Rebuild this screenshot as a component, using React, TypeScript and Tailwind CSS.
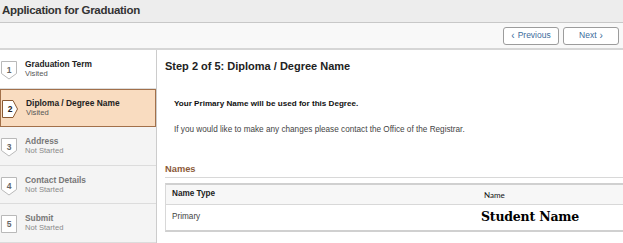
import React from "react";

function Badge({ n, shape, active }: { n: number; shape: "down" | "right" | "square"; active?: boolean }) {
  const stroke = active ? "#8a5a34" : "#b9b9b9";
  const fill = "#ffffff";
  let d = "";
  if (shape === "down") d = "M0.5 0.5 H15.5 V12.5 L8 18 L0.5 12.5 Z";
  if (shape === "right") d = "M0.5 0.5 H11 L15.5 9 L11 17.5 H0.5 Z";
  if (shape === "square") d = "M0.5 0.5 H15.5 V17.5 H0.5 Z";
  return (
    <div className="relative w-[16px] h-[19px] shrink-0">
      <svg width="16" height="19" viewBox="0 0 16 19" className="absolute inset-0">
        <path d={d} fill={fill} stroke={stroke} strokeWidth="1" />
      </svg>
      <span
        className={`absolute left-0 top-[3px] w-[16px] text-center text-[8.5px] leading-[12px] font-bold ${active ? "text-[#222]" : "text-[#666]"}`}
      >
        {n}
      </span>
    </div>
  );
}

function Step({
  n,
  title,
  status,
  shape,
  variant,
}: {
  n: number;
  title: string;
  status: string;
  shape: "down" | "right" | "square";
  variant: "visited" | "active" | "none";
}) {
  const bg =
    variant === "active"
      ? "bg-[#f9dcc0] border border-[#a2704a]"
      : variant === "visited"
      ? "bg-white border-b border-[#dcdcdc]"
      : "bg-[#f4f4f4] border-b border-[#dcdcdc]";
  const titleColor = variant === "none" ? "text-[#777]" : "text-[#222]";
  const statusColor = variant === "none" ? "text-[#8a8a8a]" : "text-[#555]";
  return (
    <div className={`h-[38.5px] flex items-center gap-[8px] pl-[1px] ${bg}`}>
      <div className="mt-[4px]">
        <Badge n={n} shape={shape} active={variant === "active"} />
      </div>
      <div className="flex flex-col leading-[10px] mt-[1px]">
        <span className={`text-[8.4px] font-bold ${titleColor}`}>{title}</span>
        <span className={`text-[7.6px] ${statusColor}`}>{status}</span>
      </div>
    </div>
  );
}

export default function App() {
  return (
    <div className="w-[623px] h-[243px] overflow-hidden bg-white font-['Liberation_Sans',Arial,sans-serif]">
      <div className="h-[23px] bg-[#ededed] border-b border-[#c8c8c8] flex items-center pl-[2px]">
        <span className="text-[11.5px] font-bold text-[#333] leading-none tracking-[-0.3px]">Application for Graduation</span>
      </div>
      <div className="h-[27px] bg-[#f8f8f8] border-b-2 border-[#d6d6d6] flex items-center justify-end gap-[4px] pr-[4px]">
        <button className="w-[56px] h-[18px] rounded-[3px] border border-[#9c9c9c] bg-white text-[8.5px] text-[#3c6c9c] flex items-center justify-center gap-[3px]">
          <span className="text-[10px] leading-none">‹</span>
          <span>Previous</span>
        </button>
        <button className="w-[56px] h-[18px] rounded-[3px] border border-[#9c9c9c] bg-white text-[8.5px] text-[#3c6c9c] flex items-center justify-center gap-[3px]">
          <span>Next</span>
          <span className="text-[10px] leading-none">›</span>
        </button>
      </div>
      <div className="flex">
        <div className="w-[157px] shrink-0 border-r border-[#cccccc]">
          <Step n={1} title="Graduation Term" status="Visited" shape="down" variant="visited" />
          <Step n={2} title="Diploma / Degree Name" status="Visited" shape="right" variant="active" />
          <Step n={3} title="Address" status="Not Started" shape="down" variant="none" />
          <Step n={4} title="Contact Details" status="Not Started" shape="down" variant="none" />
          <Step n={5} title="Submit" status="Not Started" shape="square" variant="none" />
        </div>
        <div className="flex-1 pl-[8px]">
          <div className="pt-[9px] text-[11px] font-bold text-[#222] leading-[14px]">
            Step 2 of 5: Diploma / Degree Name
          </div>
          <div className="pl-[9px] pt-[25px] text-[8.1px] font-bold text-[#111] leading-[11px]">
            Your Primary Name will be used for this Degree.
          </div>
          <div className="pl-[9px] pt-[15px] text-[8.2px] text-[#444] leading-[11px]">
            If you would like to make any changes please contact the Office of the Registrar.
          </div>
          <div className="mt-[28px] border-b border-[#d8d8d8] pb-[2px] text-[9.3px] font-bold text-[#8c5a3a] leading-[12px]">
            Names
          </div>
          <div className="mt-[5px] border-t-2 border-b-2 border-[#d0d0d0] border-l border-l-[#d8d8d8]">
            <div className="flex h-[20px] items-center bg-[#f7f7f7] border-b border-[#d8d8d8] text-[8.2px] font-bold text-[#222]">
              <span className="pl-[6px] w-[318px]">Name Type</span>
              <span className="font-normal font-['Lato',sans-serif] text-[8px] text-[#111]">Name</span>
            </div>
            <div className="flex h-[25px] items-center text-[8.2px] text-[#444]">
              <span className="pl-[6px] w-[315px]">Primary</span>
              <span className="font-['DejaVu_Serif',serif] font-extrabold text-[12.5px] text-black tracking-[-0.2px]">
                Student Name
              </span>
            </div>
          </div>
        </div>
      </div>
    </div>
  );
}
